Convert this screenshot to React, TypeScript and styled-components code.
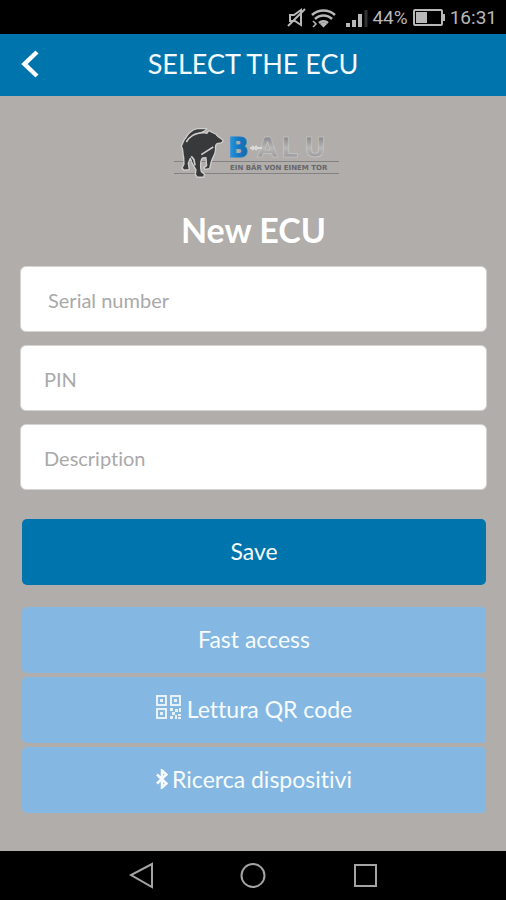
import React from "react";
import styled, { createGlobalStyle } from "styled-components";

const GlobalStyle = createGlobalStyle`
  *, *::before, *::after { box-sizing: border-box; }
  body {
    margin: 0;
    background: #b0adaa;
    font-family: Lato, sans-serif;
    font-variant-ligatures: none;
  }
  input, button { font-variant-ligatures: none; }
`;

const Screen = styled.div`
  min-height: 100vh;
  display: flex;
  flex-direction: column;
  background: #b0adaa;
`;

const StatusBar = styled.div`
  height: 34px;
  padding: 2px 9px 0 0;
  display: flex;
  align-items: center;
  justify-content: flex-end;
  background: #000;
  color: #b8b8b8;
  font: 400 19px/24px Roboto, sans-serif;
`;

const StatusIcons = styled.svg`
  display: block;
  margin-right: 3px;
`;

const BatteryIcon = styled.svg`
  display: block;
  margin: 0 4px 0 5px;
`;

const Header = styled.header`
  height: 62px;
  padding-bottom: 2px;
  display: grid;
  grid-template-columns: 60px 1fr 60px;
  align-items: center;
  background: #0074ac;
  color: #f4faff;
`;

const BackButton = styled.button`
  width: 60px;
  height: 60px;
  padding: 0 0 0 20px;
  border: 0;
  background: none;
  color: #fff;
  display: flex;
  align-items: center;
`;

const Title = styled.h1`
  margin: 0;
  text-align: center;
  font-size: 27px;
  line-height: 34px;
  font-weight: 400;
`;

const Content = styled.main`
  flex: 1;
  padding: 28px 19px 36px 20px;
  display: flex;
  flex-direction: column;
`;

const Logo = styled.svg`
  display: block;
  align-self: center;
  margin-left: 6px;
`;

const Heading = styled.h2`
  margin: 28px 0 14px;
  text-align: center;
  color: #fff;
  font-size: 34px;
  line-height: 44px;
  font-weight: 700;
`;

const Form = styled.form`
  display: flex;
  flex-direction: column;
  gap: 13px;
`;

const Field = styled.input<{ $inset: number }>`
  width: 100%;
  height: 66px;
  padding: 2px 20px 0 ${(p) => p.$inset}px;
  border: 1px solid #d5d3d1;
  border-radius: 6px;
  background: #fff;
  color: #555;
  font-family: Lato, sans-serif;
  font-size: 20px;
  line-height: 26px;
  &::placeholder { color: #a9a9a9; opacity: 1; }
`;

const Action = styled.button<{ $primary?: boolean }>`
  height: 66px;
  margin: ${(p) => (p.$primary ? "16px 1px 0 2px" : "0")};
  padding: 0 0 2px;
  display: flex;
  align-items: center;
  justify-content: center;
  gap: 6px;
  border: 0;
  border-radius: 5px;
  background: ${(p) => (p.$primary ? "#0074ac" : "#84b8e2")};
  color: #f8fcff;
  font-family: Lato, sans-serif;
  font-size: 23px;
  line-height: 28px;
`;

const Shortcuts = styled.div`
  margin: 22px 1px 0 2px;
  display: flex;
  flex-direction: column;
  gap: 4px;
`;

const QrIcon = styled.svg`
  display: block;
  margin-bottom: 4px;
`;

const BluetoothIcon = styled.svg`
  display: block;
  margin-right: -2px;
`;

const NavBar = styled.nav`
  height: 49px;
  display: flex;
  align-items: center;
  justify-content: center;
  gap: 64px;
  background: #000;
`;

const NavButton = styled.button`
  width: 48px;
  height: 48px;
  padding: 0;
  border: 0;
  background: none;
  color: #a4a4a4;
  display: flex;
  align-items: center;
  justify-content: center;
`;

const BaluLogo = () => (
  <Logo width="166" height="56" viewBox="0 0 166 56" role="img" aria-label="BALU – Ein Bär von einem Tor">
    <defs>
      <linearGradient id="blue" x1="0" y1="0" x2="1" y2="0">
        <stop offset="0" stopColor="#2a9be0" />
        <stop offset="0.500" stopColor="#1379c4" />
        <stop offset="1" stopColor="#1c67a8" />
      </linearGradient>
      <linearGradient id="silver" gradientUnits="userSpaceOnUse" x1="0" y1="14" x2="0" y2="34">
        <stop offset="0" stopColor="#8e8d8f" />
        <stop offset="0.500" stopColor="#b9b8b8" />
        <stop offset="1" stopColor="#98979a" />
      </linearGradient>
    </defs>
    <path d="M0 37.500H165M0 49.500H165" stroke="#838184" strokeWidth="1" />
    <g transform="translate(-4 -2) scale(0.333)">
      <path
        d="M34 72C40 62 40 54 47 48C52 38 66 22 82 20L110 20C111 25 104 27 96 31L111 34C113 27 119 24 124 30L137 36C143 45 151 49 159 54C160 61 153 65 144 64C137 66 135 70 137 82C137 96 128 106 124 119L119 140L105 142L102 137L110 131L108 107L98 108C90 115 91 137 94 149L104 157L101 166H82L76 157L78 144L67 125L61 109L55 124L58 143L42 145L36 138L42 127L41 105C36 96 43 88 34 72Z"
        fill="#38393b"
        stroke="#d0cecc"
        strokeWidth="4"
        strokeLinejoin="round"
      />
      <path d="M49 60C60 43 72 34 101 31M94 98L108 89L130 75M64 103L72 113L75 130" fill="none" stroke="#d0cecc" strokeWidth="5" />
    </g>
    <g fontFamily="DejaVu Sans, sans-serif" fontWeight="700">
      <g fontSize="27" fill="url(#silver)" stroke="#d2d0cf" strokeWidth="0.500">
        <text x="83" y="33">A</text>
        <text x="107" y="33">L</text>
        <text x="130" y="33">U</text>
      </g>
      <text x="54" y="33" fontSize="27" fill="url(#blue)" stroke="url(#blue)">B</text>
      <text x="56" y="46" fontSize="7" fill="#67666a">EIN BÄR VON EINEM TOR</text>
    </g>
    <path d="M76 24h12M78 22l5 4M83 22l-5 4" stroke="#dad9d8" strokeWidth="2" />
  </Logo>
);

export default function App() {
  return (
    <Screen>
      <GlobalStyle />
      <StatusBar>
        <StatusIcons width="82" height="22" viewBox="0 0 82 22" fill="none" stroke="currentColor" strokeWidth="1.500" aria-hidden="true">
          <path d="M3 8h4l7-5v15l-6-4H3zM1 19L18 2" strokeWidth="2" />
          <path d="M25 8a17 17 0 0 1 23 0M28 12a12 12 0 0 1 17 0M32 16a7 7 0 0 1 9 0" strokeWidth="2.500" />
          <path d="M33 17l3.500 3.500L40 17a5 5 0 0 0-7 0z" fill="currentColor" stroke="none" />
          <path d="M26 14l3 3-3 3" />
          <path d="M61 20v-4M67 20v-7M73 20V7" strokeWidth="4" />
          <path d="M79 20V3" stroke="#333" strokeWidth="3" />
        </StatusIcons>
        44%
        <BatteryIcon width="33" height="18" viewBox="0 0 33 18" fill="none" aria-hidden="true">
          <rect x="1" y="1" width="28" height="15" rx="1" stroke="currentColor" strokeWidth="2" />
          <path d="M3 3h11v11H3zM30 5h2v7h-2z" fill="currentColor" />
        </BatteryIcon>
        16:31
      </StatusBar>
      <Header>
        <BackButton type="button" aria-label="Back">
          <svg width="20" height="28" viewBox="0 0 20 28" fill="none" stroke="currentColor" strokeWidth="4.500">
            <path d="M17 2L4.500 14L17 26" />
          </svg>
        </BackButton>
        <Title>SELECT THE ECU</Title>
      </Header>
      <Content>
        <BaluLogo />
        <Heading>New ECU</Heading>
        <Form onSubmit={(e) => e.preventDefault()}>
          <Field $inset={27} aria-label="Serial number" placeholder="Serial number" />
          <Field $inset={23} aria-label="PIN" placeholder="PIN" />
          <Field $inset={23} aria-label="Description" placeholder="Description" />
          <Action $primary type="submit">Save</Action>
        </Form>
        <Shortcuts>
          <Action type="button">Fast access</Action>
          <Action type="button">
            <QrIcon width="25" height="24" viewBox="0 0 25 24" fill="currentColor" opacity="0.850" aria-hidden="true">
              <path fillRule="evenodd" d="M0 0h11v11H0zM2 2v7h7V2zM14 0h11v11H14zM16 2v7h7V2zM0 13h11v11H0zM2 15v7h7v-7z" />
              <path d="M4 4h3v3H4zM18 4h3v3h-3zM4 17h3v3H4zM14 13h3v3h-3zM19 14h3v3h-3zM23 13h2v4h-2zM16 17h3v3h-3zM14 21h3v3h-3zM19 20h2v4h-2zM22 19h3v2h-3zM22 22h3v2h-3z" />
            </QrIcon>
            Lettura QR code
          </Action>
          <Action type="button">
            <BluetoothIcon width="12" height="20" viewBox="0 0 12 20" fill="none" stroke="currentColor" strokeWidth="2.500" aria-hidden="true">
              <path d="M1 5.500l9.500 9L6 18.500v-17l4.500 4L1 14.500" />
            </BluetoothIcon>
            Ricerca dispositivi
          </Action>
        </Shortcuts>
      </Content>
      <NavBar>
        <NavButton type="button" aria-label="Back">
          <svg width="26" height="28" viewBox="0 0 26 28" fill="none" stroke="currentColor" strokeWidth="2">
            <path d="M24 2v23L3 13z" />
          </svg>
        </NavButton>
        <NavButton type="button" aria-label="Home">
          <svg width="26" height="26" viewBox="0 0 26 26" fill="none" stroke="currentColor" strokeWidth="2">
            <circle cx="13" cy="12.500" r="11.500" />
          </svg>
        </NavButton>
        <NavButton type="button" aria-label="Recent apps">
          <svg width="24" height="24" viewBox="0 0 24 24" fill="none" stroke="currentColor" strokeWidth="2">
            <rect x="2" y="1" width="21" height="21" />
          </svg>
        </NavButton>
      </NavBar>
    </Screen>
  );
}
